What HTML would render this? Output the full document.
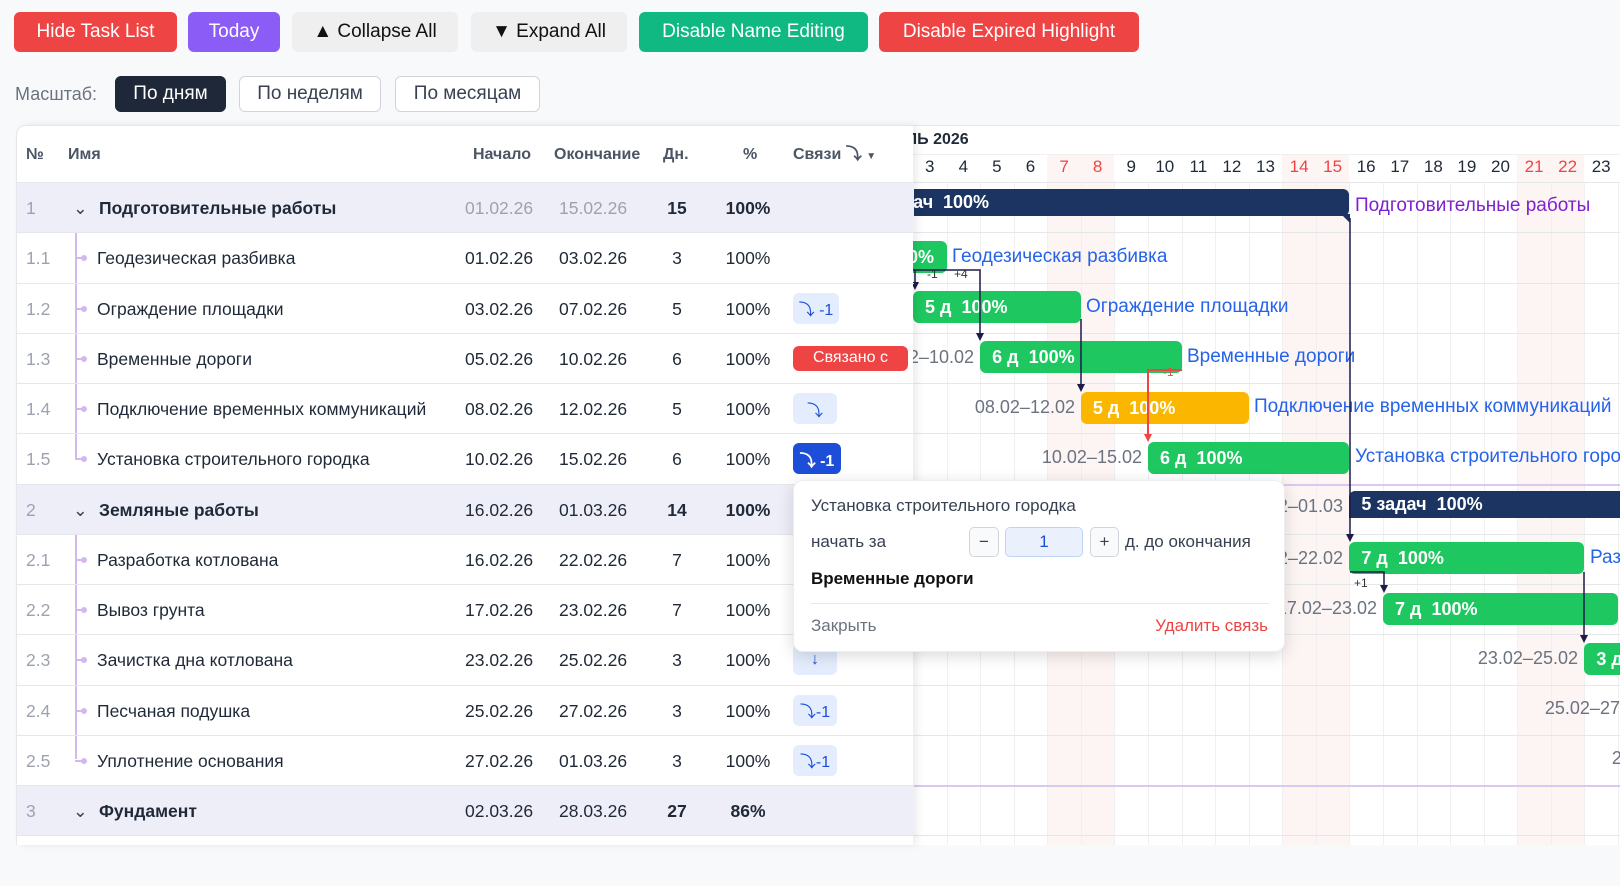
<!DOCTYPE html>
<html><head><meta charset="utf-8">
<style>
*{box-sizing:border-box;margin:0;padding:0}
body{width:1620px;height:845px;overflow:hidden;background:#f8f9fb;font-family:"Liberation Sans",sans-serif;position:relative;color:#1f2937}
.btn{position:absolute;top:12px;height:40px;border-radius:6px;color:#fff;font-size:19px;display:flex;align-items:center;justify-content:center}
.sb{position:absolute;top:76px;height:36px;border-radius:6px;font-size:19px;display:flex;align-items:center;justify-content:center;border:1px solid #d1d5db;background:#fff;color:#374151}
#tbl{position:absolute;left:16px;top:125px;width:897px;height:720px;background:#fff;border-top-left-radius:10px;border-top:1px solid #e5e7eb;border-left:1px solid #e5e7eb;box-shadow:4px 0 8px rgba(0,0,0,.08);z-index:3}
.hd{position:absolute;top:20px;font-size:16px;font-weight:bold;color:#4b5563;line-height:18px}
.row{position:absolute;left:0;width:897px;height:50.25px;border-top:1px solid #e5e7eb;font-size:17.5px}
.row span{position:absolute;top:15px;white-space:nowrap}
.g{background:#eeeef9}
.g .nm{font-weight:bold;left:82px}
.num{left:9px;color:#9ca3af}
.nm{left:80px}
.s{left:448px}.e{left:542px}
.d{left:645px;width:30px;text-align:center}
.p{left:700px;width:62px;text-align:center}
.tl{position:absolute;left:58px;width:2px;background:#d3b8ee}
.dot{position:absolute;left:58px;top:24px;width:10px;height:2px;background:#d3b8ee}
.dot:after{content:"";position:absolute;left:6px;top:-2px;width:6px;height:6px;border-radius:3px;background:#d3b8ee}
.bd{position:absolute;left:776px;height:31px;top:9px;border-radius:6px;background:#e3edfd;color:#1d4ed8;font-size:16px;display:flex;align-items:center;justify-content:center}
#gc{position:absolute;left:913px;top:125px;width:707px;height:720px;overflow:hidden;background:#fff;border-top:1px solid #e5e7eb}
.we{position:absolute;top:28px;height:720px;width:33.57px;background:#fdf5f3}
.vl{position:absolute;top:56px;height:690px;width:1px;background:#f0f0f0}
.dn{position:absolute;top:31px;width:33.57px;text-align:center;font-size:17px;color:#1f2937}
.hl{position:absolute;left:0;width:707px;height:1px;background:#e5e7eb}
.bar{position:absolute;height:32px;border-radius:6px;background:#1ec760;color:#fff;font-weight:bold;font-size:18px;line-height:32px;padding-left:12px;white-space:nowrap}
.gb{position:absolute;height:27px;background:#1b3461;color:#fff;font-weight:bold;font-size:18px;line-height:27px;white-space:nowrap;border-radius:6px}
.lb{position:absolute;font-size:19px;color:#2563eb;white-space:nowrap}
.dt{position:absolute;font-size:18px;color:#6b7280;white-space:nowrap;text-align:right;width:130px}
#pop{position:absolute;left:793px;top:480px;width:492px;height:172px;background:#fff;border-radius:10px;box-shadow:0 4px 16px rgba(0,0,0,.15);border:1px solid #eee;z-index:5;font-size:17px;color:#374151}
#pop span,#pop div{position:absolute;white-space:nowrap}
</style></head><body>
<div class="btn" style="left:14px;width:163px;background:#ef4444">Hide Task List</div>
<div class="btn" style="left:188px;width:92px;background:#8b5cf6">Today</div>
<div class="btn" style="left:292px;width:166px;background:#efefef;color:#111">▲ Collapse All</div>
<div class="btn" style="left:471px;width:156px;background:#efefef;color:#111">▼ Expand All</div>
<div class="btn" style="left:639px;width:229px;background:#10b981">Disable Name Editing</div>
<div class="btn" style="left:879px;width:260px;background:#ef4444">Disable Expired Highlight</div>
<div style="position:absolute;left:15px;top:84px;font-size:18px;color:#6b7280">Масштаб:</div>
<div class="sb" style="left:115px;width:111px;background:#1e2838;color:#fff;border-color:#1e2838">По дням</div>
<div class="sb" style="left:239px;width:142px">По неделям</div>
<div class="sb" style="left:395px;width:145px">По месяцам</div>

<div id="tbl">
<span class="hd" style="left:9px">№</span><span class="hd" style="left:51px">Имя</span>
<span class="hd" style="left:456px">Начало</span><span class="hd" style="left:537px">Окончание</span>
<span class="hd" style="left:646px">Дн.</span><span class="hd" style="left:726px">%</span>
<span class="hd" style="left:776px">Связи ⤵ <span style="font-size:10px">▼</span></span>
<div class="tl" style="top:107px;height:225px"></div>
<div class="tl" style="top:408px;height:225px"></div>

<div class="row g" style="top:56px"><span class="num">1</span><span style="left:56px;color:#444">⌄</span><span class="nm">Подготовительные работы</span><span class="s" style="color:#9ca3af">01.02.26</span><span class="e" style="color:#9ca3af">15.02.26</span><span class="d" style="font-weight:bold">15</span><span class="p" style="font-weight:bold">100%</span></div>
<div class="row" style="top:106.25px"><div class="dot"></div><span class="num">1.1</span><span class="nm">Геодезическая разбивка</span><span class="s">01.02.26</span><span class="e">03.02.26</span><span class="d">3</span><span class="p">100%</span></div>
<div class="row" style="top:156.5px"><div class="dot"></div><span class="num">1.2</span><span class="nm">Ограждение площадки</span><span class="s">03.02.26</span><span class="e">07.02.26</span><span class="d">5</span><span class="p">100%</span><div class="bd" style="width:46px">⤵ -1</div></div>
<div class="row" style="top:206.75px"><div class="dot"></div><span class="num">1.3</span><span class="nm">Временные дороги</span><span class="s">05.02.26</span><span class="e">10.02.26</span><span class="d">6</span><span class="p">100%</span><div class="bd" style="width:115px;height:25px;top:12px;background:#ef4444;color:#fff">Связано с</div></div>
<div class="row" style="top:257px"><div class="dot"></div><span class="num">1.4</span><span class="nm">Подключение временных коммуникаций</span><span class="s">08.02.26</span><span class="e">12.02.26</span><span class="d">5</span><span class="p">100%</span><div class="bd" style="width:44px">⤵</div></div>
<div class="row" style="top:307.25px"><div class="dot"></div><span class="num">1.5</span><span class="nm">Установка строительного городка</span><span class="s">10.02.26</span><span class="e">15.02.26</span><span class="d">6</span><span class="p">100%</span><div class="bd" style="width:48px;background:#1d4ed8;color:#fff;font-weight:bold">⤵ -1</div></div>
<div class="row g" style="top:357.5px"><span class="num">2</span><span style="left:56px;color:#444">⌄</span><span class="nm">Земляные работы</span><span class="s">16.02.26</span><span class="e">01.03.26</span><span class="d" style="font-weight:bold">14</span><span class="p" style="font-weight:bold">100%</span></div>
<div class="row" style="top:407.75px"><div class="dot"></div><span class="num">2.1</span><span class="nm">Разработка котлована</span><span class="s">16.02.26</span><span class="e">22.02.26</span><span class="d">7</span><span class="p">100%</span></div>
<div class="row" style="top:458px"><div class="dot"></div><span class="num">2.2</span><span class="nm">Вывоз грунта</span><span class="s">17.02.26</span><span class="e">23.02.26</span><span class="d">7</span><span class="p">100%</span></div>
<div class="row" style="top:508.25px"><div class="dot"></div><span class="num">2.3</span><span class="nm">Зачистка дна котлована</span><span class="s">23.02.26</span><span class="e">25.02.26</span><span class="d">3</span><span class="p">100%</span><div class="bd" style="width:44px">↓</div></div>
<div class="row" style="top:558.5px"><div class="dot"></div><span class="num">2.4</span><span class="nm">Песчаная подушка</span><span class="s">25.02.26</span><span class="e">27.02.26</span><span class="d">3</span><span class="p">100%</span><div class="bd" style="width:44px">⤵-1</div></div>
<div class="row" style="top:608.75px"><div class="dot"></div><span class="num">2.5</span><span class="nm">Уплотнение основания</span><span class="s">27.02.26</span><span class="e">01.03.26</span><span class="d">3</span><span class="p">100%</span><div class="bd" style="width:44px">⤵-1</div></div>
<div class="row g" style="top:659px"><span class="num">3</span><span style="left:56px;color:#444">⌄</span><span class="nm">Фундамент</span><span class="s">02.03.26</span><span class="e">28.03.26</span><span class="d" style="font-weight:bold">27</span><span class="p" style="font-weight:bold">86%</span></div>
<div class="row" style="top:709.25px"></div>
</div>

<div id="gc">
<div class="we" style="left:134.28px"></div><div class="we" style="left:167.85px"></div>
<div class="we" style="left:369.3px"></div><div class="we" style="left:402.8px"></div>
<div class="we" style="left:604.3px"></div><div class="we" style="left:637.8px"></div>
<div class="vl" style="left:33.6px"></div><div class="vl" style="left:67.1px"></div><div class="vl" style="left:100.7px"></div><div class="vl" style="left:134.3px"></div><div class="vl" style="left:167.9px"></div><div class="vl" style="left:201.4px"></div><div class="vl" style="left:235px"></div><div class="vl" style="left:268.6px"></div><div class="vl" style="left:302.1px"></div><div class="vl" style="left:335.7px"></div><div class="vl" style="left:369.3px"></div><div class="vl" style="left:402.8px"></div><div class="vl" style="left:436.4px"></div><div class="vl" style="left:470px"></div><div class="vl" style="left:503.6px"></div><div class="vl" style="left:537.1px"></div><div class="vl" style="left:570.7px"></div><div class="vl" style="left:604.3px"></div><div class="vl" style="left:637.8px"></div><div class="vl" style="left:671.4px"></div><div class="vl" style="left:705px"></div>
<div style="position:absolute;left:-64px;top:5px;font-size:16px;font-weight:bold">ФЕВРАЛЬ 2026</div>
<div class="hl" style="top:28px;background:#f0f0f0"></div>
<div class="dn" style="left:0">3</div><div class="dn" style="left:33.57px">4</div><div class="dn" style="left:67.14px">5</div><div class="dn" style="left:100.71px">6</div><div class="dn" style="left:134.28px;color:#ef4444">7</div><div class="dn" style="left:167.85px;color:#ef4444">8</div><div class="dn" style="left:201.42px">9</div><div class="dn" style="left:235px">10</div><div class="dn" style="left:268.6px">11</div><div class="dn" style="left:302.1px">12</div><div class="dn" style="left:335.7px">13</div><div class="dn" style="left:369.3px;color:#ef4444">14</div><div class="dn" style="left:402.8px;color:#ef4444">15</div><div class="dn" style="left:436.4px">16</div><div class="dn" style="left:470px">17</div><div class="dn" style="left:503.6px">18</div><div class="dn" style="left:537.1px">19</div><div class="dn" style="left:570.7px">20</div><div class="dn" style="left:604.3px;color:#ef4444">21</div><div class="dn" style="left:637.8px;color:#ef4444">22</div><div class="dn" style="left:671.4px">23</div>
<div class="hl" style="top:56px"></div><div class="hl" style="top:106.25px"></div><div class="hl" style="top:156.5px"></div><div class="hl" style="top:206.75px"></div><div class="hl" style="top:257px"></div><div class="hl" style="top:307.25px"></div><div class="hl" style="top:357.5px;background:#d9c8f0;height:2px"></div><div class="hl" style="top:407.75px"></div><div class="hl" style="top:458px"></div><div class="hl" style="top:508.25px"></div><div class="hl" style="top:558.5px"></div><div class="hl" style="top:608.75px"></div><div class="hl" style="top:659px;background:#d9c8f0;height:2px"></div><div class="hl" style="top:709.25px"></div>

<div class="gb" style="left:-80px;top:63px;width:516px"><span style="position:absolute;left:50px">задач</span><span style="position:absolute;left:110px">100%</span></div>
<div style="position:absolute;left:428px;top:88px;width:9px;height:9px;background:#1b3461;clip-path:polygon(0 0,100% 0,100% 100%)"></div>
<div class="lb" style="left:442px;top:69px;color:#7e22ce">Подготовительные работы</div>
<div class="bar" style="left:-100px;top:114.75px;width:133.6px;padding-left:85px">00%</div>
<div class="lb" style="left:39px;top:120px">Геодезическая разбивка</div>
<div class="bar" style="left:0;top:165px;width:167.8px">5 д&nbsp; 100%</div>
<div class="lb" style="left:173px;top:170px">Ограждение площадки</div>
<div class="dt" style="left:-69px;top:221px">05.02–10.02</div>
<div class="bar" style="left:67.14px;top:215.25px;width:201.5px">6 д&nbsp; 100%</div>
<div class="lb" style="left:274px;top:220px">Временные дороги</div>
<div class="dt" style="left:32px;top:271px">08.02–12.02</div>
<div class="bar" style="left:167.85px;top:265.5px;width:167.8px;background:#fbb700">5 д&nbsp; 100%</div>
<div class="lb" style="left:341px;top:270px">Подключение временных коммуникаций</div>
<div class="dt" style="left:99px;top:321px">10.02–15.02</div>
<div class="bar" style="left:235px;top:315.75px;width:201.4px">6 д&nbsp; 100%</div>
<div class="lb" style="left:442px;top:320px">Установка строительного городка</div>
<div class="dt" style="left:300px;top:370px">16.02–01.03</div>
<div class="gb" style="left:436.4px;top:364.5px;width:400px;padding-left:12px;border-radius:6px 0 0 0">5 задач&nbsp; 100%</div>
<div class="dt" style="left:300px;top:422px">16.02–22.02</div>
<div class="bar" style="left:436.4px;top:416.25px;width:235px">7 д&nbsp; 100%</div>
<div class="lb" style="left:677px;top:421px">Разработка котлована</div>
<div class="dt" style="left:334px;top:472px">17.02–23.02</div>
<div class="bar" style="left:470px;top:466.5px;width:235px">7 д&nbsp; 100%</div>
<div class="dt" style="left:535px;top:522px">23.02–25.02</div>
<div class="bar" style="left:671.4px;top:516.75px;width:101px">3 д</div>
<div class="dt" style="left:602px;top:572px">25.02–27.02</div>
<div class="dt" style="left:669px;top:622px">27.02–01.03</div>

<svg width="707" height="720" style="position:absolute;left:0;top:0" fill="none">
<g stroke="#1e1b4b" stroke-width="1.5">
<path d="M437 92V412"/>
<path d="M0 144H67V210"/>
<path d="M2 144V160"/>
<path d="M168 193V262"/>
<path d="M437 446H471V463"/>
<path d="M671 446V513"/>
</g>
<g fill="#1e1b4b">
<path d="M433 408L437 416L441 408Z"/><path d="M63 207L67 215L71 207Z"/><path d="M164 258L168 266L172 258Z"/><path d="M467 459L471 467L475 459Z"/><path d="M667 509L671 517L675 509Z"/><path d="M-2 156L2 164L6 156Z"/>
</g>
<path d="M269 244H235V312" stroke="#ef4444" stroke-width="2"/>
<path d="M231 308L235 316L239 308Z" fill="#ef4444"/>
<text x="14" y="152" font-size="12" fill="#333" font-family="Liberation Sans">-1</text>
<text x="41" y="152" font-size="12" fill="#333" font-family="Liberation Sans">+4</text>
<text x="250" y="250" font-size="12" fill="#ef4444" font-family="Liberation Sans">-1</text>
<text x="441" y="461" font-size="12" fill="#333" font-family="Liberation Sans">+1</text>
</svg>
</div>

<div id="pop">
<span style="left:17px;top:15px">Установка строительного городка</span>
<span style="left:17px;top:51px">начать за</span>
<div style="left:175px;top:46px;width:30px;height:30px;border:1px solid #d1d5db;border-radius:5px;background:#f9fafb;text-align:center;line-height:28px">−</div>
<div style="left:211px;top:46px;width:78px;height:30px;border:1px solid #bfd3f5;border-radius:5px;background:#eaf1fd;text-align:center;line-height:28px;color:#1d4ed8">1</div>
<div style="left:296px;top:46px;width:29px;height:30px;border:1px solid #d1d5db;border-radius:5px;background:#f9fafb;text-align:center;line-height:28px">+</div>
<span style="left:331px;top:51px">д. до окончания</span>
<span style="left:17px;top:88px;font-weight:bold;color:#111">Временные дороги</span>
<div style="left:17px;top:122px;width:458px;height:1px;background:#e5e7eb"></div>
<span style="left:17px;top:135px;color:#6b7280">Закрыть</span>
<span style="right:16px;top:135px;color:#ef4444">Удалить связь</span>
</div>
</body></html>
